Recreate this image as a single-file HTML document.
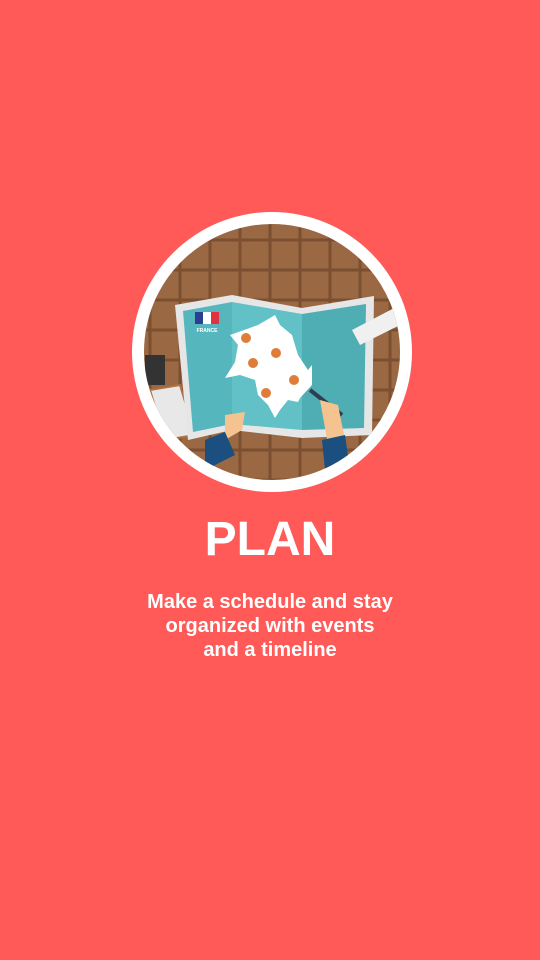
<!DOCTYPE html>
<html><head><style>
html,body{margin:0;padding:0;width:540px;height:960px;background:#FF5A57;overflow:hidden;font-family:"Liberation Sans",sans-serif;color:#fff}
svg{position:absolute;left:0;top:0}
.t{position:absolute;left:0;width:540px;text-align:center;font-weight:bold}
</style></head><body>
<svg width="540" height="960" viewBox="0 0 540 960">
<defs><clipPath id="c"><circle cx="272" cy="352" r="128"/></clipPath>
<pattern id="tile" x="0" y="0" width="30" height="30" patternUnits="userSpaceOnUse">
<rect width="30" height="30" fill="#7b4f2f"/><rect x="1.5" y="1.5" width="27" height="27" fill="#9a6843"/></pattern></defs>
<circle cx="272" cy="352" r="140" fill="#fff"/>
<g clip-path="url(#c)">
<rect x="130" y="210" width="290" height="290" fill="url(#tile)"/>
<rect x="145" y="355" width="20" height="30" fill="#333"/>
<polygon points="150,390 180,385 195,435 165,440" fill="#e8e8e8" stroke="#b07040" stroke-width="2"/>
<polygon points="175,305 232,295 302,308 374,296 372,435 302,438 232,430 188,440" fill="#e6e6e6"/>
<polygon points="183,311 232,302 232,424 193,432" fill="#55b6bd"/>
<polygon points="232,302 302,314 302,430 232,424" fill="#61c1c7"/>
<polygon points="302,314 366,304 364,428 302,430" fill="#4fadb4"/>
<rect x="195" y="312" width="8" height="12" fill="#2c3e91"/><rect x="203" y="312" width="8" height="12" fill="#fff"/><rect x="211" y="312" width="8" height="12" fill="#e03240"/>
<text x="207" y="332" font-size="5" font-weight="bold" text-anchor="middle" fill="#fff" font-family="Liberation Sans">FRANCE</text>
<path d="M230,335 L258,325 L270,318 L275,315 L280,325 L292,335 L298,355 L308,370 L312,365 L312,385 L300,398 L298,402 L288,400 L280,410 L275,418 L268,405 L258,395 L255,380 L240,375 L225,378 L235,362 L238,345Z" fill="#fff"/>
<g fill="#e07c3a"><circle cx="246" cy="338" r="5"/><circle cx="276" cy="353" r="5"/><circle cx="253" cy="363" r="5"/><circle cx="294" cy="380" r="5"/><circle cx="266" cy="393" r="5"/></g>
<polygon points="352,330 400,305 410,320 360,345" fill="#f0f0f0"/>
<polygon points="225,415 245,412 242,430 225,440" fill="#f5c38f"/>
<polygon points="205,440 225,432 235,455 205,470" fill="#1a4f7f"/>
<line x1="310" y1="390" x2="342" y2="415" stroke="#2c3e50" stroke-width="4"/>
<polygon points="320,400 338,405 345,440 328,445" fill="#f5c38f"/>
<polygon points="322,440 345,435 350,470 325,470" fill="#1a4f7f"/>
</g>
</svg>
<div class="t" style="top:512px;font-size:48px;line-height:56px">PLAN</div>
<div class="t" style="top:590px;font-size:20px;line-height:24px">Make a schedule and stay<br>organized with events<br>and a timeline</div>
</body></html>
